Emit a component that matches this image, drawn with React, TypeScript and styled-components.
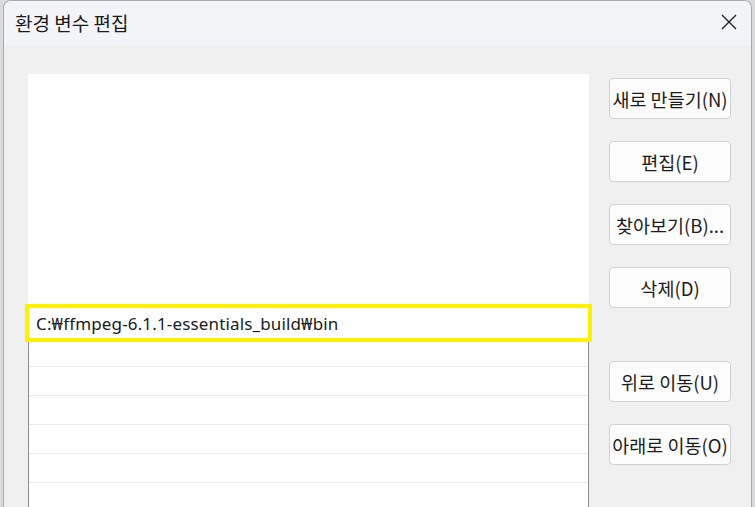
import styled, { createGlobalStyle } from "styled-components";

const GlobalStyle = createGlobalStyle`
  html, body {
    margin: 0;
    padding: 0;
    background: #d9dade;
    overflow: hidden;
  }
  body {
    font-family: "Noto Sans", "Noto Sans CJK KR", sans-serif;
    color: #1b1b1b;
  }
`;

const Screen = styled.div`
  width: 755px;
  height: 507px;
  display: flex;
  padding-left: 3px;
  box-sizing: border-box;
`;

const Window = styled.div`
  width: 749px;
  height: 520px;
  display: flex;
  flex-direction: column;
  border: 1px solid #a9abb0;
  border-bottom: none;
  border-radius: 8px 8px 0 0;
  background: #f0f0f0;
  overflow: hidden;
  box-sizing: border-box;
`;

const TitleBar = styled.div`
  height: 44px;
  flex: none;
  display: flex;
  align-items: center;
  justify-content: space-between;
  padding: 0 10px 0 11px;
  background: #f3f4f8;
`;

const Title = styled.div`
  font-family: "Noto Sans CJK KR", sans-serif;
  font-size: 19px;
  color: #1a1a1a;
  margin-top: -2px;
`;

const CloseButton = styled.button`
  width: 24px;
  height: 24px;
  padding: 0;
  border: none;
  background: transparent;
  display: flex;
  align-items: center;
  justify-content: center;
  margin-top: -3px;
`;

const Body = styled.div`
  flex: 1;
  display: flex;
  padding: 29px 20px 0 24px;
  gap: 20px;
`;

const List = styled.div`
  width: 561px;
  flex: none;
  display: flex;
  flex-direction: column;
  background: #ffffff;
`;

const EmptyArea = styled.div`
  height: 230px;
  flex: none;
`;

const EditRow = styled.div`
  height: 38px;
  margin: 0 -3px;
  border: 4px solid #fff200;
  box-sizing: border-box;
  display: flex;
  align-items: center;
  padding-left: 7px;
  font-family: "Noto Sans", "Noto Sans CJK KR", sans-serif;
  font-size: 17px;
  letter-spacing: 0.15px;
  color: #1a1a1a;
  background: #ffffff;
`;

const Rows = styled.div`
  flex: 1;
  display: flex;
  flex-direction: column;
  border-left: 1px solid #8c8c8c;
  border-right: 1px solid #8c8c8c;
`;

const Row = styled.div<{ $h: number }>`
  height: ${(p) => p.$h}px;
  flex: none;
  border-bottom: 1px solid #ebebeb;
  box-sizing: border-box;
`;

const Buttons = styled.div`
  display: flex;
  flex-direction: column;
  padding-top: 4px;
  gap: 22px;
`;

const Button = styled.button<{ $gapBefore?: number }>`
  width: 122px;
  height: 41px;
  margin-top: ${(p) => p.$gapBefore ?? 0}px;
  padding: 0;
  background: #fdfdfd;
  border: 1px solid #d0d0d0;
  border-radius: 4px;
  font-family: "Noto Sans CJK KR", sans-serif;
  font-size: 18.5px;
  color: #1b1b1b;
  white-space: nowrap;
  display: flex;
  align-items: center;
  justify-content: center;
`;

const rowHeights = [25, 29, 29, 29, 29, 29];

export default function App() {
  return (
    <>
      <GlobalStyle />
      <Screen>
        <Window>
          <TitleBar>
            <Title>환경 변수 편집</Title>
            <CloseButton aria-label="닫기">
              <svg width="16" height="16" viewBox="0 0 16 16">
                <path d="M1 1 L15 15 M15 1 L1 15" stroke="#1a1a1a" strokeWidth="1.3" fill="none" />
              </svg>
            </CloseButton>
          </TitleBar>
          <Body>
            <List>
              <EmptyArea />
              <EditRow>C:₩ffmpeg-6.1.1-essentials_build₩bin</EditRow>
              <Rows>
                {rowHeights.map((h, i) => (
                  <Row key={i} $h={h} />
                ))}
              </Rows>
            </List>
            <Buttons>
              <Button>새로 만들기(N)</Button>
              <Button>편집(E)</Button>
              <Button>찾아보기(B)...</Button>
              <Button>삭제(D)</Button>
              <Button $gapBefore={31}>위로 이동(U)</Button>
              <Button>아래로 이동(O)</Button>
            </Buttons>
          </Body>
        </Window>
      </Screen>
    </>
  );
}
